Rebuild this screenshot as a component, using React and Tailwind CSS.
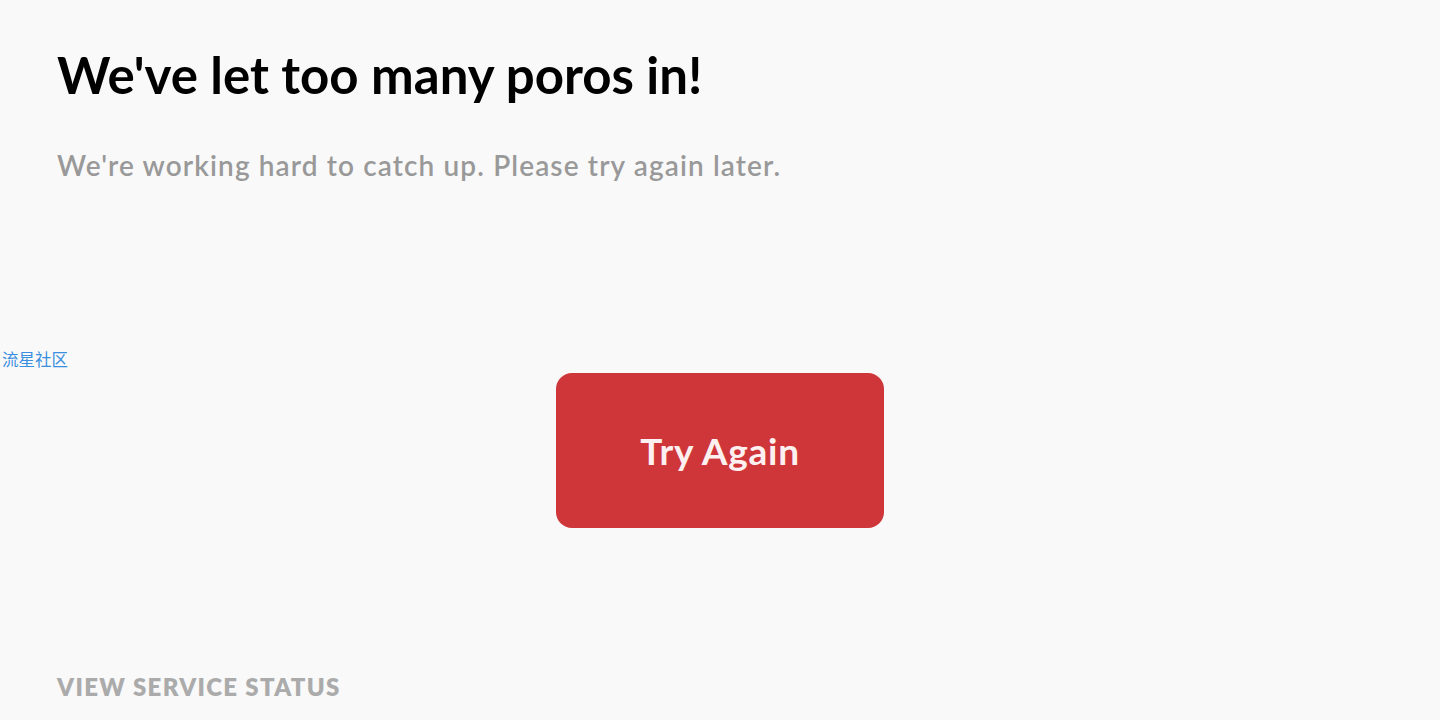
import React from 'react'

const font = { fontFamily: 'Lato, "Noto Sans CJK SC", sans-serif' }

export default function App() {
  return (
    <div className="relative flex h-[720px] w-[1440px] flex-col bg-[#f9f9f9] px-[57px] font-['Lato','Noto_Sans_CJK_SC',sans-serif]">
      {/* Header copy */}
      <h1 className="mt-[43px] text-[51px] leading-[64px] font-bold text-black">
        We've let too many poros in!
      </h1>
      <p className="mt-[40px] text-[28px] leading-[36px] font-semibold tracking-[0.04em] text-[#999999]">
        We're working hard to catch up. Please try again later.
      </p>

      <span className="absolute left-[2px] top-[348px] text-[16.5px] text-[#3b8fe0]" style={font}>
        流星社区
      </span>

      <div className="mt-[190px] flex justify-center">
        <button className="h-[155px] w-[328px] rounded-2xl bg-[#cf363a] text-[37px] font-bold tracking-[0.02em] text-[#fdf0f0]">
          Try Again
        </button>
      </div>

      <div className="mt-auto mb-[18px] text-[24px] leading-[30px] font-extrabold tracking-[0.055em] text-[#ababab]">
        VIEW SERVICE STATUS
      </div>
    </div>
  )
}
